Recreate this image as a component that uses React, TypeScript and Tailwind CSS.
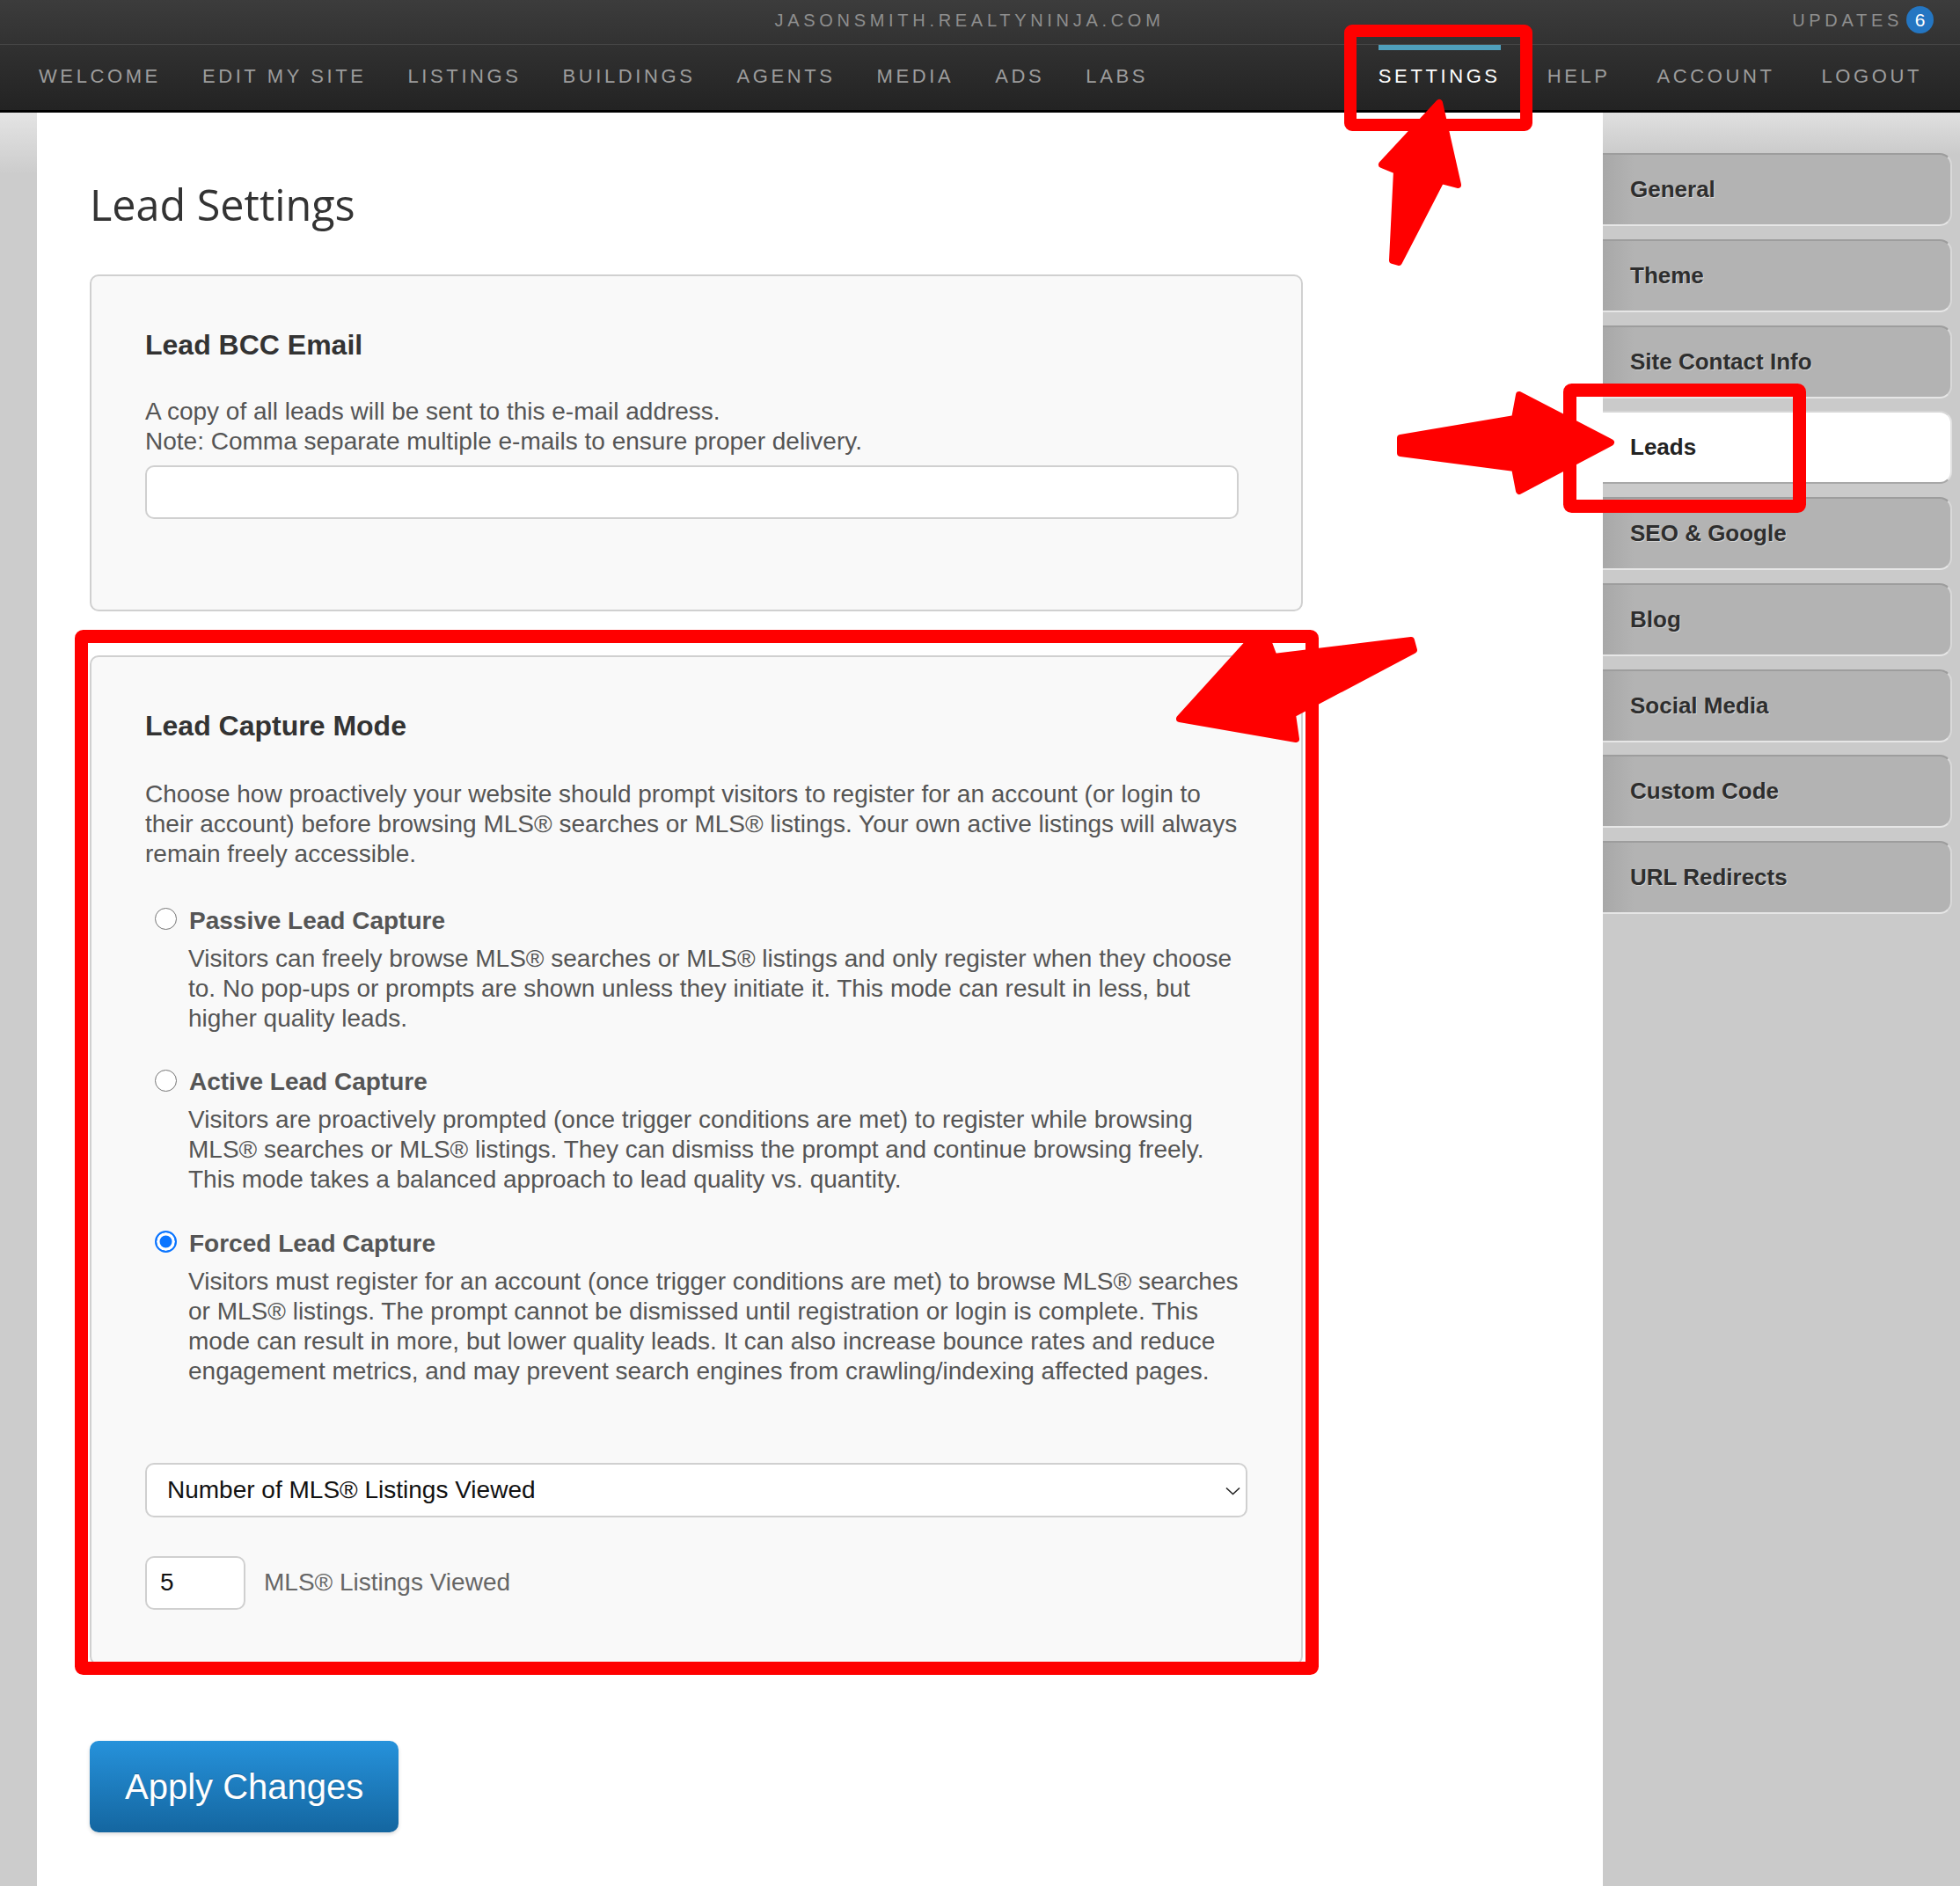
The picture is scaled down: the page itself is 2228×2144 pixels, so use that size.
import React from "react";

const navLeft = ["WELCOME", "EDIT MY SITE", "LISTINGS", "BUILDINGS", "AGENTS", "MEDIA", "ADS", "LABS"];
const navRight = ["SETTINGS", "HELP", "ACCOUNT", "LOGOUT"];

const tabs = [
  "General",
  "Theme",
  "Site Contact Info",
  "Leads",
  "SEO & Google",
  "Blog",
  "Social Media",
  "Custom Code",
  "URL Redirects",
];

type Mode = {
  id: string;
  label: string;
  lines: string[];
};

const modes: Mode[] = [
  {
    id: "passive",
    label: "Passive Lead Capture",
    lines: [
      "Visitors can freely browse MLS® searches or MLS® listings and only register when they choose",
      "to. No pop-ups or prompts are shown unless they initiate it. This mode can result in less, but",
      "higher quality leads.",
    ],
  },
  {
    id: "active",
    label: "Active Lead Capture",
    lines: [
      "Visitors are proactively prompted (once trigger conditions are met) to register while browsing",
      "MLS® searches or MLS® listings. They can dismiss the prompt and continue browsing freely.",
      "This mode takes a balanced approach to lead quality vs. quantity.",
    ],
  },
  {
    id: "forced",
    label: "Forced Lead Capture",
    lines: [
      "Visitors must register for an account (once trigger conditions are met) to browse MLS® searches",
      "or MLS® listings. The prompt cannot be dismissed until registration or login is complete. This",
      "mode can result in more, but lower quality leads. It can also increase bounce rates and reduce",
      "engagement metrics, and may prevent search engines from crawling/indexing affected pages.",
    ],
  },
];

function NavItem({ label, active }: { label: string; active?: boolean }) {
  return (
    <div
      className={`flex h-full items-center border-t-[6px] pb-[10px] text-[22px] tracking-[3.6px] ${
        active ? "border-[#4fa0bd] text-white" : "border-transparent text-[#9d9d9d]"
      }`}
    >
      {label}
    </div>
  );
}

function SideTab({ label, active }: { label: string; active?: boolean }) {
  return (
    <div
      className={`flex h-[83px] w-[397px] items-center rounded-r-[14px] border-y-2 border-r-2 pl-[31px] text-[26px] font-bold ${
        active
          ? "border-t-[#d6d6d6] border-b-[#a8a8a8] border-r-[#e2e2e2] bg-white text-[#222]"
          : "border-t-[#9d9d9d] border-b-[#e6e6e6] border-r-[#d9d9d9] bg-[linear-gradient(to_right,#a8a8a8,#b3b3b3_36px)] text-[#2e2e2e] [text-shadow:1px_1px_0_rgba(255,255,255,0.45)]"
      }`}
    >
      {label}
    </div>
  );
}

export default function App() {
  const [mode, setMode] = React.useState("forced");
  const [trigger, setTrigger] = React.useState("views");
  const [count, setCount] = React.useState("5");
  const [bcc, setBcc] = React.useState("");

  return (
    <div className="relative min-h-[2144px] w-[2228px] overflow-hidden bg-white font-['Liberation_Sans',Arial,sans-serif]">
      {/* top strip */}
      <div className="flex h-[50px] items-center bg-[linear-gradient(to_bottom,#3c3c3c,#323232)] pb-[5px]">
        <div className="flex-1" />
        <div className="ml-[6px] text-[20px] tracking-[4.7px] text-[#8e8e8e]">JASONSMITH.REALTYNINJA.COM</div>
        <div className="flex flex-1 items-center justify-end pr-[30px]">
          <span className="text-[20px] tracking-[4.7px] text-[#8e8e8e]">UPDATES</span>
          <span className="ml-[4px] flex h-[31px] w-[31px] items-center justify-center rounded-full bg-[#2476c2] text-[21px] text-white">
            6
          </span>
        </div>
      </div>

      {/* main nav */}
      <div className="flex h-[78px] items-stretch justify-between border-t border-b-[3px] border-t-[#474747] border-b-black bg-[linear-gradient(to_bottom,#313131,#232323)]">
        <div className="flex gap-[47px] pl-[44px]">
          {navLeft.map((n) => (
            <NavItem key={n} label={n} />
          ))}
        </div>
        <div className="flex gap-[53px] pr-[43px]">
          {navRight.map((n) => (
            <NavItem key={n} label={n} active={n === "SETTINGS"} />
          ))}
        </div>
      </div>

      <div className="flex min-h-[2016px]">
        {/* left gutter */}
        <div className="w-[42px] bg-[linear-gradient(to_bottom,#e4e4e4,#cccccc_70px)]" />

        {/* content */}
        <div className="w-[1780px] bg-white pl-[60px] pt-[80px]">
          <h1 className="mb-[55px] font-['Open_Sans',sans-serif] text-[48.5px] font-medium leading-none text-[#333]">
            Lead Settings
          </h1>

          {/* BCC EMAIL */}
          <div className="w-[1379px] rounded-[10px] border-2 border-[#d0d0d0] bg-[#f9f9f9] px-[61px] pt-[59px] pb-[103px]">
            <h2 className="text-[32px] font-bold leading-[38px] text-[#333]">Lead BCC Email</h2>
            <p className="mt-[40px] text-[28px] leading-[34px] text-[#555]">
              A copy of all leads will be sent to this e-mail address.
              <br />
              Note: Comma separate multiple e-mails to ensure proper delivery.
            </p>
            <input
              value={bcc}
              onChange={(e) => setBcc(e.target.value)}
              className="mt-[10px] block h-[61px] w-[1243px] rounded-[10px] border-2 border-[#d0d0d0] bg-white px-[20px] text-[28px] outline-none"
            />
          </div>

          {/* CAPTURE MODE */}
          <div className="mt-[50px] w-[1379px] rounded-[10px] border-2 border-[#d0d0d0] bg-[#f9f9f9] px-[61px] pt-[59px] pb-[61px]">
            <h2 className="text-[32px] font-bold leading-[38px] text-[#333]">Lead Capture Mode</h2>
            <p className="mt-[42px] whitespace-nowrap text-[28px] leading-[34px] text-[#555]">
              Choose how proactively your website should prompt visitors to register for an account (or login to
              <br />
              their account) before browsing MLS® searches or MLS® listings. Your own active listings will always
              <br />
              remain freely accessible.
            </p>

            <div className="mt-[42px] flex flex-col gap-[38.5px]">
              {modes.map((m) => (
                <div key={m.id}>
                  <label className="flex h-[34px] cursor-pointer items-center">
                    <input
                      type="radio"
                      name="mode"
                      checked={mode === m.id}
                      onChange={() => setMode(m.id)}
                      className="ml-[11px] -mt-[4px] h-[25px] w-[25px] shrink-0 cursor-pointer appearance-none rounded-full border-[1.5px] border-[#767676] bg-white checked:border-[2.5px] checked:border-[#0b75ff] checked:bg-[#0b75ff] checked:shadow-[inset_0_0_0_3.5px_white]"
                    />
                    <span className="ml-[14px] text-[28px] font-bold leading-[34px] text-[#555]">{m.label}</span>
                  </label>
                  <p className="mt-[9px] whitespace-nowrap pl-[49px] text-[28px] leading-[34px] text-[#555]">
                    {m.lines.map((l, i) => (
                      <React.Fragment key={i}>
                        {i > 0 && <br />}
                        {l}
                      </React.Fragment>
                    ))}
                  </p>
                </div>
              ))}
            </div>

            <div className="relative mt-[87px] w-[1253px]">
              <select
                value={trigger}
                onChange={(e) => setTrigger(e.target.value)}
                className="block h-[62px] w-full cursor-pointer appearance-none rounded-[10px] border-2 border-[#d0d0d0] bg-white pl-[23px] text-[28px] text-[#111] outline-none"
              >
                <option value="views">Number of MLS® Listings Viewed</option>
                <option value="time">Time on Site</option>
              </select>
              <svg
                className="pointer-events-none absolute right-[8px] top-[27px]"
                width="17"
                height="10"
                viewBox="0 0 17 10"
                fill="none"
              >
                <path d="M1 1.5l7.5 7 7.5-7" stroke="#222" strokeWidth="1.6" />
              </svg>
            </div>

            <div className="mt-[44px] flex items-center">
              <input
                value={count}
                onChange={(e) => setCount(e.target.value)}
                className="h-[61px] w-[114px] rounded-[10px] border-2 border-[#d0d0d0] bg-white pl-[15px] text-[28px] text-[#111] outline-none"
              />
              <span className="ml-[21px] text-[28px] text-[#666]">MLS® Listings Viewed</span>
            </div>
          </div>

          <button className="mt-[86px] h-[104px] rounded-[10px] bg-[linear-gradient(to_bottom,#2692db,#1466a0)] px-[40px] text-[40px] text-white shadow-[0_2px_4px_rgba(0,0,0,0.15)] [text-shadow:0_-1px_0_rgba(0,0,0,0.25)]">
            Apply Changes
          </button>
        </div>

        {/* settings sidebar */}
        <div className="flex w-[406px] flex-col gap-[14.75px] bg-[linear-gradient(to_bottom,#e0e0e0,#cacaca_48px)] pt-[46px]">
          {tabs.map((t) => (
            <SideTab key={t} label={t} active={t === "Leads"} />
          ))}
        </div>
      </div>

      {/* red annotations drawn over the screenshot */}
      <svg
        className="pointer-events-none absolute left-0 top-0"
        width="2228"
        height="2144"
        viewBox="0 0 2228 2144"
      >
        <g fill="none" stroke="#ff0000" strokeLinejoin="round">
          <rect x="1535" y="35" width="200" height="107" strokeWidth="14" rx="2" />
          <rect x="1784.5" y="443.5" width="261" height="132" strokeWidth="15" rx="2" />
          <rect x="92.5" y="723.5" width="1399" height="1173" strokeWidth="15" rx="2" />
        </g>
        <g fill="#ff0000" stroke="#ff0000" strokeWidth="8" strokeLinejoin="round">
          <polygon points="1636,117 1657,210 1638,205 1590,298 1583,296 1588,194 1571,187" />
          <polygon points="1592,498 1722,476 1727,449 1831,503 1727,558 1722,532 1592,515" />
          <polygon points="1341,817 1419,731 1442,731 1448,747 1604,728 1607,739 1469,812 1473,840" />
        </g>
      </svg>
    </div>
  );
}
